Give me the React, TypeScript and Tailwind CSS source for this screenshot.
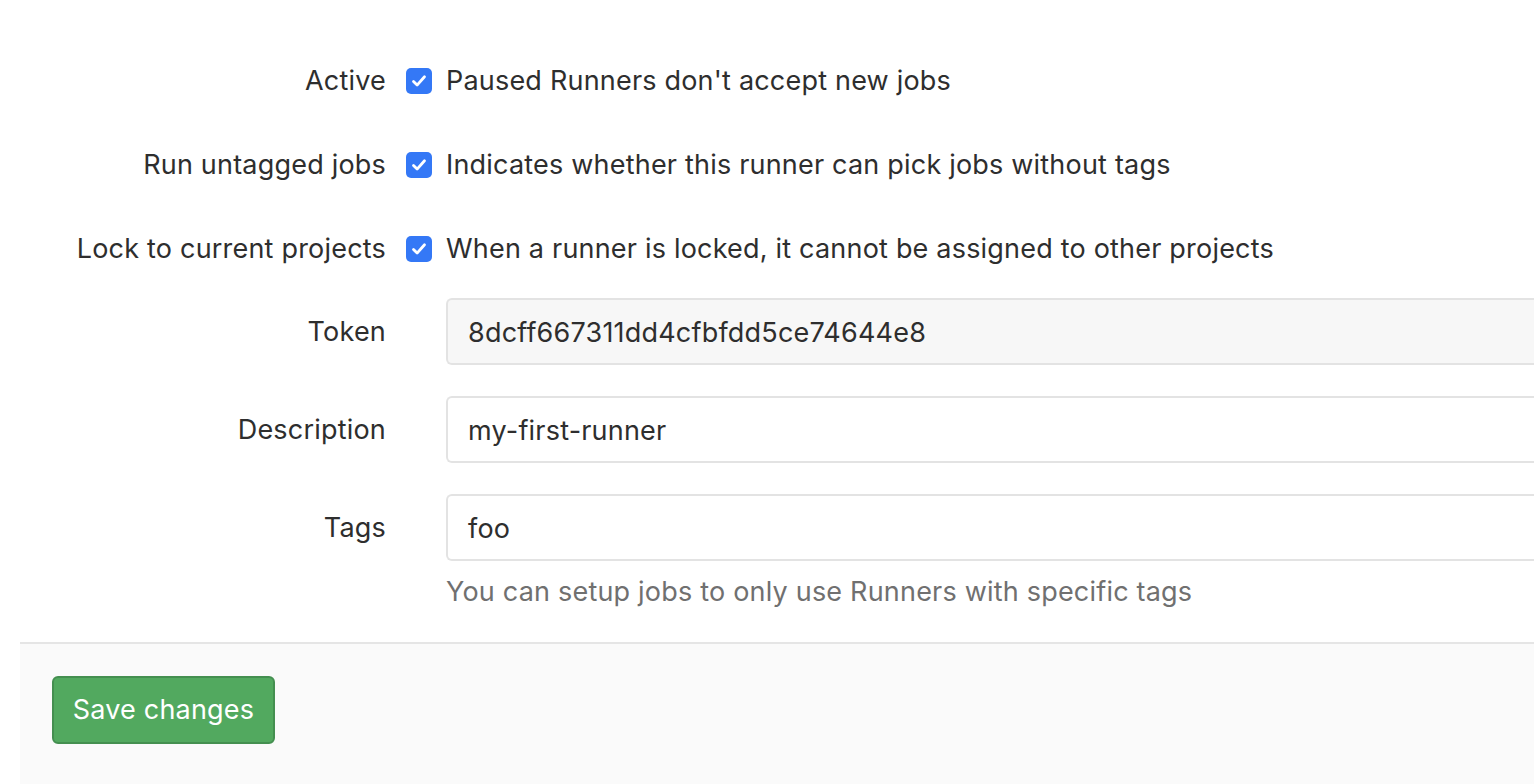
import * as React from 'react';

const font = { fontFamily: 'Inter, "Noto Sans", sans-serif' };

const Check = () => (
    <span className="flex h-[26px] w-[26px] shrink-0 items-center justify-center rounded-[5px] bg-[#3478f6]">
        <svg width="18" height="18" viewBox="0 0 18 18" fill="none">
            <path d="M3.5 9.5l3.6 3.6L14.5 4.8" stroke="white" strokeWidth="2.8" strokeLinecap="round" strokeLinejoin="round" />
        </svg>
    </span>
);

const CheckRow = ({ label, text }: { label: string; text: string }) => (
    <div className="flex h-[40px] items-center mb-[44px]">
        <div className="w-[386px] shrink-0 text-right">{label}</div>
        <div className="flex items-center pl-[20px] gap-[14px]">
            <Check />
            <span>{text}</span>
        </div>
    </div>
);

const InputRow = ({ label, value, readOnly, last }: { label: string; value: string; readOnly?: boolean; last?: boolean }) => (
    <div className={`flex items-center ${last ? '' : 'mb-[31px]'}`}>
        <div className="w-[386px] shrink-0 text-right">{label}</div>
        <div className="flex-1 pl-[60px]">
            <div className={`flex h-[67px] items-center rounded-l-[6px] border-2 border-r-0 border-[#e3e3e3] pl-[20px] pt-[3px] ${readOnly ? 'bg-[#f7f7f7]' : 'bg-white'}`}>
                {value}
            </div>
        </div>
    </div>
);

const App = () => {
    return (
        <div className="min-h-[784px] bg-white text-[27px] text-[#2e2e2e] leading-[36px] tracking-[0.2px]" style={font}>
            <div className="pt-[61px]">
                <CheckRow label="Active" text="Paused Runners don't accept new jobs" />
                <CheckRow label="Run untagged jobs" text="Indicates whether this runner can pick jobs without tags" />
                <CheckRow label="Lock to current projects" text="When a runner is locked, it cannot be assigned to other projects" />
                <div className="-mt-[15px]">
                    <InputRow label="Token" value="8dcff667311dd4cfbfdd5ce74644e8" readOnly />
                    <InputRow label="Description" value="my-first-runner" />
                    <InputRow label="Tags" value="foo" last />
                </div>
                <div className="pl-[446px] mt-[13px] text-[#707070]">You can setup jobs to only use Runners with specific tags</div>
            </div>
            <div className="ml-[20px] mt-[32px] border-t-2 border-[#e5e5e5] bg-[#fafafa] pl-[32px] pt-[32px] pb-[40px]">
                <button className="h-[68px] w-[223px] rounded-[6px] border-2 border-[#448f50] bg-[#52a95f] text-white text-[27px]">
                    Save changes
                </button>
            </div>
        </div>
    );
};

export default App;
